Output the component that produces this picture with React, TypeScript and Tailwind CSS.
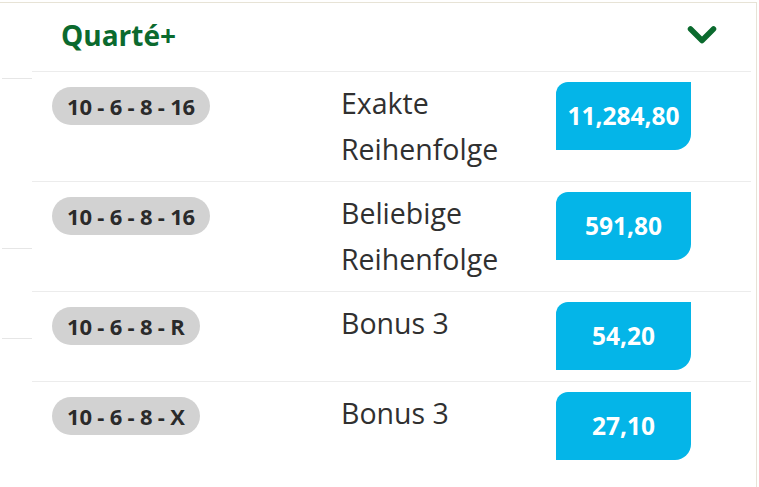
import React from 'react';

type Row = { combo: string; label: string[]; price: string };

const ROWS: Row[] = [
  { combo: '10 - 6 - 8 - 16', label: ['Exakte', 'Reihenfolge'], price: '11,284,80' },
  { combo: '10 - 6 - 8 - 16', label: ['Beliebige', 'Reihenfolge'], price: '591,80' },
  { combo: '10 - 6 - 8 - R', label: ['Bonus 3'], price: '54,20' },
  { combo: '10 - 6 - 8 - X', label: ['Bonus 3'], price: '27,10' },
];

const Chevron: React.FC = () => (
  <svg width="30" height="22" viewBox="0 0 30 22" fill="none">
    <polyline
      points="3.5,5 15,16.5 26.5,5"
      stroke="#0b6a2e"
      strokeWidth="5.5"
      strokeLinecap="round"
      strokeLinejoin="round"
    />
  </svg>
);

const ResultRow: React.FC<{ row: Row }> = ({ row }) => (
  <div className="flex items-start border-t border-[#ececec] pl-[20px]">
    <div className="w-[289px] shrink-0 pt-[15px]">
      <span className="inline-flex h-[38px] items-center rounded-full bg-[#d2d2d2] px-[15px] text-[22px] font-bold tracking-[-0.2px] text-[#2a2a2a]">
        {row.combo}
      </span>
    </div>
    <div className="flex-1 pt-[8px] pb-[9px] text-[28.5px] leading-[46px] text-[#303030]">
      {row.label.map((l) => (
        <div key={l}>{l}</div>
      ))}
    </div>
    <div className="mt-[10px] mb-[11px] mr-[60px] flex h-[68px] w-[135px] shrink-0 items-center justify-center rounded-tl-[12px] rounded-br-[16px] bg-[#04b5e8] text-[24.5px] font-bold text-white">
      {row.price}
    </div>
  </div>
);

const App: React.FC = () => {
  return (
    <div className="h-[487px] w-[759px] overflow-hidden bg-white pt-[2px] font-['Open_Sans',sans-serif]">
      <div className="flex h-full w-[757px] border-t border-r border-[#e7e3d6]">
        {/* neighbour column edge */}
        <div className="ml-[2px] w-[30px] shrink-0">
          <div className="h-[75px]" />
          <div className="h-px bg-[#e6e6e6]" />
          <div className="h-[169px]" />
          <div className="h-px bg-[#e6e6e6]" />
          <div className="h-[89px]" />
          <div className="h-px bg-[#e6e6e6]" />
        </div>

        {/* Quarté+ panel */}
        <div className="mr-[5px] flex-1">
          <div className="flex h-[68px] items-center justify-between pb-[4px] pl-[29px] pr-[34px]">
            <span className="text-[28px] font-bold text-[#0b6a2e]">Quarté+</span>
            <Chevron />
          </div>
          {ROWS.map((r, i) => (
            <ResultRow key={i} row={r} />
          ))}
        </div>
      </div>
    </div>
  );
};

export default App;
